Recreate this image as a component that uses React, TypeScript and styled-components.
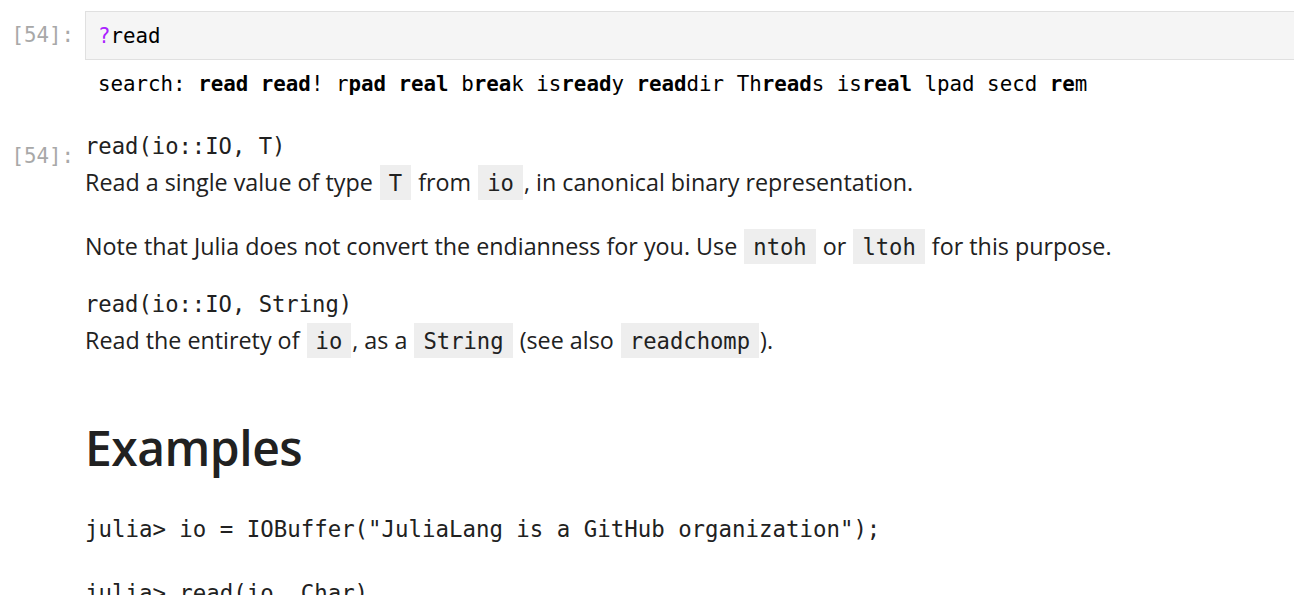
import React from "react";
import styled, { createGlobalStyle } from "styled-components";

const Global = createGlobalStyle`
  html, body { margin: 0; padding: 0; background: #ffffff; }
  body { overflow: hidden; }
`;

const MONO = `"DejaVu Sans Mono", "Liberation Mono", monospace`;
const SANS = `"Open Sans", "Noto Sans", sans-serif`;

const Notebook = styled.div`
  width: 1294px;
  height: 595px;
  overflow: hidden;
  padding-top: 11px;
  box-sizing: border-box;
`;

const Cell = styled.div<{ $top?: number }>`
  display: flex;
  align-items: flex-start;
  margin-top: ${(p) => p.$top ?? 0}px;
`;

const Prompt = styled.div<{ $pad?: number }>`
  width: 85px;
  flex: none;
  box-sizing: border-box;
  padding-right: 11px;
  padding-top: ${(p) => p.$pad ?? 0}px;
  text-align: right;
  font-family: ${MONO};
  font-size: 20.8px;
  line-height: 28px;
  color: #a8a8a8;
`;

const InputBox = styled.div`
  flex: 1;
  height: 49px;
  box-sizing: border-box;
  background: #f5f5f5;
  border: 1px solid #e0e0e0;
  border-right: none;
  padding: 0 12px;
  display: flex;
  align-items: center;
  font-family: ${MONO};
  font-size: 20.8px;
  color: #000;
`;

const Op = styled.span`
  color: #aa22ff;
`;

const Stream = styled.div`
  padding: 9px 0 0 13px;
  font-family: ${MONO};
  font-size: 20.8px;
  line-height: 30px;
  color: #000;
  white-space: pre;
`;

const Markdown = styled.div`
  flex: 1;
  color: #212121;
`;

const Sig = styled.div`
  font-family: ${MONO};
  font-size: 22.2px;
  line-height: 36px;
  white-space: pre;
`;

const Para = styled.p<{ $mb?: number }>`
  margin: 0 0 ${(p) => p.$mb ?? 0}px;
  font-family: ${SANS};
  font-size: 23.3px;
  line-height: 36px;
`;

const Code = styled.code`
  font-family: ${MONO};
  font-size: 22.2px;
  line-height: 1;
  background: #eeeeee;
  padding: 5px 9px 4px;
  margin: 0 1px;
`;

const Heading = styled.h1`
  margin: 60px 0 35px;
  font-family: ${SANS};
  font-weight: 600;
  font-size: 48px;
  line-height: 60px;
  letter-spacing: -0.5px;
  color: #212121;
`;

const Pre = styled.pre`
  margin: 0;
  font-family: ${MONO};
  font-size: 22.4px;
  line-height: 32px;
  color: #212121;
`;

export default function App() {
  return (
    <>
      <Global />
      <Notebook>
        <Cell>
          <Prompt $pad={10}>[54]:</Prompt>
          <InputBox>
            <span>
              <Op>?</Op>read
            </span>
          </InputBox>
        </Cell>
        <Cell>
          <Prompt />
          <Stream>
            search: <b>read</b> <b>read</b>! r<b>pad</b> <b>real</b> b<b>rea</b>k is<b>read</b>y <b>read</b>dir Th<b>read</b>s is<b>real</b> lpad secd <b>re</b>m
          </Stream>
        </Cell>
        <Cell $top={29}>
          <Prompt $pad={14}>[54]:</Prompt>
          <Markdown>
            <Sig>read(io::IO, T)</Sig>
            <Para $mb={28}>
              Read a single value of type <Code>T</Code> from <Code>io</Code>, in canonical binary representation.
            </Para>
            <Para $mb={22}>
              Note that Julia does not convert the endianness for you. Use <Code>ntoh</Code> or <Code>ltoh</Code> for this purpose.
            </Para>
            <Sig>read(io::IO, String)</Sig>
            <Para>
              Read the entirety of <Code>io</Code>, as a <Code>String</Code> (see also <Code>readchomp</Code>).
            </Para>
            <Heading>Examples</Heading>
            <Pre>{`julia> io = IOBuffer("JuliaLang is a GitHub organization");

julia> read(io, Char)
'J': ASCII/Unicode U+004A (category Lu: Letter, uppercase)`}</Pre>
          </Markdown>
        </Cell>
      </Notebook>
    </>
  );
}
